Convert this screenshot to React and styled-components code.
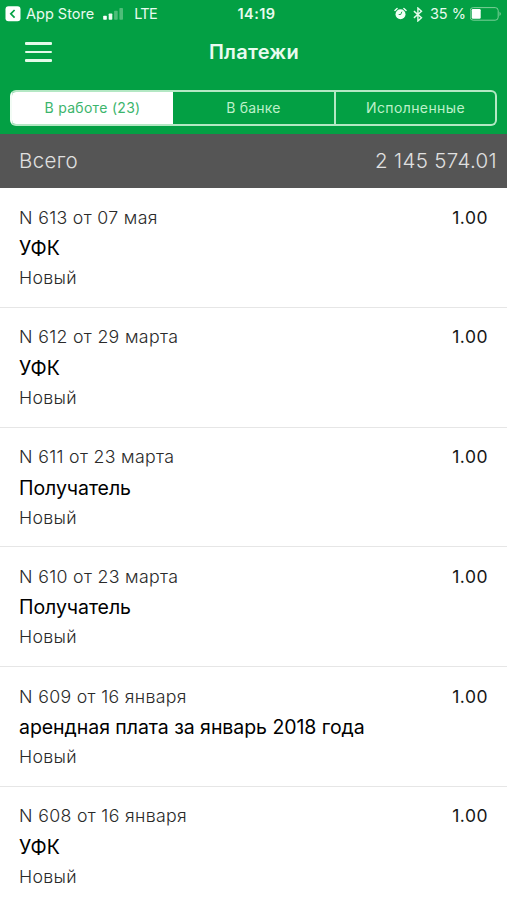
import React from "react";
import styled, { createGlobalStyle } from "styled-components";

const GREEN = "#03a044";
const OUTLINE = "#b4e8c4";

const GlobalStyle = createGlobalStyle`
  * { box-sizing: border-box; }
  body { margin: 0; background: #fff; }
`;

const Screen = styled.main`
  width: 507px;
  height: 900px;
  overflow: hidden;
  background: #fff;
  font-family: Inter, "Liberation Sans", sans-serif;
  white-space: nowrap;
`;

const Header = styled.header`
  height: 134px;
  background: ${GREEN};
  color: #e9fbef;
`;

const StatusBar = styled.div`
  display: grid;
  grid-template-columns: 1fr auto 1fr;
  align-items: center;
  height: 28px;
  padding: 0 5px 0 5px;
  font-size: 14.5px;
  line-height: 28px;
`;

const StatusGroup = styled.div`
  display: flex;
  align-items: center;
  justify-content: ${(p) => (p.$end ? "flex-end" : "flex-start")};
`;

const StatusText = styled.span`
  margin-left: ${(p) => p.$gap || 0}px;
  font-weight: ${(p) => p.$weight || 400};
  letter-spacing: ${(p) => p.$spacing || 0}px;
`;

const Clock = styled(StatusText)`
  margin-left: 6px;
`;

const Icon = styled.svg`
  display: block;
  flex: none;
  margin-left: ${(p) => p.$gap || 0}px;
`;

const TitleBar = styled.div`
  display: grid;
  grid-template-columns: 60px 1fr 60px;
  align-items: center;
  height: 48px;
`;

const MenuButton = styled.button`
  display: flex;
  flex-direction: column;
  gap: 6px;
  width: 27px;
  margin: 0 0 0 25px;
  padding: 0;
  border: 0;
  background: none;
`;

const MenuLine = styled.span`
  height: 2.6px;
  border-radius: 1px;
  background: #e4fbea;
`;

const Title = styled.h1`
  margin: 0 0 0 1px;
  text-align: center;
  font-size: 20px;
  line-height: 28px;
  font-weight: 600;
  letter-spacing: 0.25px;
`;

const Segments = styled.nav`
  display: grid;
  grid-template-columns: 161px 161px 1fr;
  height: 36px;
  margin: 14px 10px 0;
  border: 2px solid ${OUTLINE};
  border-left-color: #f2fcf5;
  border-radius: 6px;
  overflow: hidden;
`;

const Segment = styled.button`
  padding: 0;
  border: 0;
  border-left: ${(p) => (p.$divided ? `2px solid ${OUTLINE}` : "0")};
  background: ${(p) => (p.$active ? "#fff" : "transparent")};
  color: ${(p) => (p.$active ? "#3cb56c" : "#bdf0c9")};
  font: 400 14px/32px Inter, "Liberation Sans", sans-serif;
  letter-spacing: ${(p) => p.$spacing || 0}px;
`;

const Total = styled.section`
  display: flex;
  justify-content: space-between;
  height: 54px;
  padding: 0 10px 0 19px;
  background: #555;
  color: #e0e0e0;
  font-size: 20.5px;
  line-height: 54px;
  font-weight: 300;
`;

const TotalText = styled.span`
  letter-spacing: 0.35px;
`;

const List = styled.ul`
  margin: 0;
  padding: 0;
  list-style: none;
`;

const Payment = styled.li`
  height: 119.75px;
  padding: 14.5px 19px 0;
  border-bottom: 1px solid #e6e6e6;
`;

const PaymentTop = styled.div`
  display: flex;
  justify-content: space-between;
  height: 30.5px;
  line-height: 30px;
  font-size: 17.5px;
`;

const Caption = styled.div`
  color: #2a2a2a;
  font-size: 17.75px;
  line-height: 30px;
  font-weight: 350;
  letter-spacing: 0.33px;
`;

const Amount = styled.span`
  color: #161616;
  font-weight: 400;
  letter-spacing: 0.5px;
`;

const Payee = styled.div`
  color: #000;
  font-size: 19.5px;
  line-height: 30px;
  font-weight: 400;
  letter-spacing: -0.05px;
`;

const payments = [
  { title: "N 613 от 07 мая", payee: "УФК" },
  { title: "N 612 от 29 марта", payee: "УФК" },
  { title: "N 611 от 23 марта", payee: "Получатель" },
  { title: "N 610 от 23 марта", payee: "Получатель" },
  { title: "N 609 от 16 января", payee: "арендная плата за январь 2018 года" },
  { title: "N 608 от 16 января", payee: "УФК" },
];

function BackIcon() {
  return (
    <Icon width="16" height="16" viewBox="0 0 16 16">
      <rect x="0.5" y="0.3" width="15" height="15" rx="3" fill="#fff" />
      <path d="M9.6 4 5.8 7.8l3.8 3.8" fill="none" stroke={GREEN} strokeWidth="1.7" />
    </Icon>
  );
}

function SignalIcon() {
  return (
    <Icon $gap={9} width="21" height="14" viewBox="0 0 21 14">
      <rect x="0.2" y="8.8" width="3.6" height="4" rx="0.7" fill="#fff" />
      <rect x="5.7" y="6.5" width="3.6" height="6.3" rx="0.7" fill="#e9fbef" />
      <rect x="11.1" y="3.8" width="3.6" height="9" rx="0.7" fill="#4fbd79" />
      <rect x="16.4" y="1" width="3.6" height="11.8" rx="0.7" fill="#4fbd79" />
    </Icon>
  );
}

function AlarmIcon() {
  return (
    <Icon width="13" height="14" viewBox="0 0 13 14">
      <circle cx="6.5" cy="7.3" r="5" fill="#f2fff5" />
      <path d="M.9 3.4 3.1 1.4M12.1 3.4 9.9 1.4" stroke="#f2fff5" strokeWidth="1.4" strokeLinecap="round" />
      <path d="M7.9 4.7 6.7 7.5H4.7" fill="none" stroke={GREEN} strokeWidth="0.9" />
    </Icon>
  );
}

function BluetoothIcon() {
  return (
    <Icon $gap={6} width="10" height="15" viewBox="0 0 10 15">
      <path d="m.9 4.1 7.6 6.7L4.9 14V1l3.6 3.2-7.6 6.7" fill="none" stroke="#e4fbea" strokeWidth="1.4" />
    </Icon>
  );
}

function BatteryIcon() {
  return (
    <Icon $gap={4} width="32" height="14" viewBox="0 0 32 14">
      <rect x="0.2" y="0.6" width="28" height="12.6" rx="3" fill="none" stroke="#7ccf98" strokeWidth="1" />
      <rect x="1.7" y="2.1" width="9" height="9.6" rx="1.2" fill="#fff" />
      <path d="M29.5 4.8c1.8.8 1.8 3.4 0 4.2Z" fill="#7ccf98" />
    </Icon>
  );
}

export default function App() {
  return (
    <Screen>
      <GlobalStyle />
      <Header>
        <StatusBar>
          <StatusGroup>
            <BackIcon />
            <StatusText $gap={5}>App Store</StatusText>
            <SignalIcon />
            <StatusText $gap={10} $spacing={-0.6}>LTE</StatusText>
          </StatusGroup>
          <Clock $weight={600} $spacing={0.45}>14:19</Clock>
          <StatusGroup $end>
            <AlarmIcon />
            <BluetoothIcon />
            <StatusText $gap={7}>35 %</StatusText>
            <BatteryIcon />
          </StatusGroup>
        </StatusBar>
        <TitleBar>
          <MenuButton aria-label="Меню">
            <MenuLine />
            <MenuLine />
            <MenuLine />
          </MenuButton>
          <Title>Платежи</Title>
        </TitleBar>
        <Segments>
          <Segment $active $spacing={0.3}>В работе (23)</Segment>
          <Segment $spacing={0.2}>В банке</Segment>
          <Segment $divided $spacing={0.4}>Исполненные</Segment>
        </Segments>
      </Header>
      <Total>
        <TotalText>Всего</TotalText>
        <TotalText>2 145 574.01</TotalText>
      </Total>
      <List>
        {payments.map((payment) => (
          <Payment key={payment.title}>
            <PaymentTop>
              <Caption>{payment.title}</Caption>
              <Amount>1.00</Amount>
            </PaymentTop>
            <Payee>{payment.payee}</Payee>
            <Caption>Новый</Caption>
          </Payment>
        ))}
      </List>
    </Screen>
  );
}
